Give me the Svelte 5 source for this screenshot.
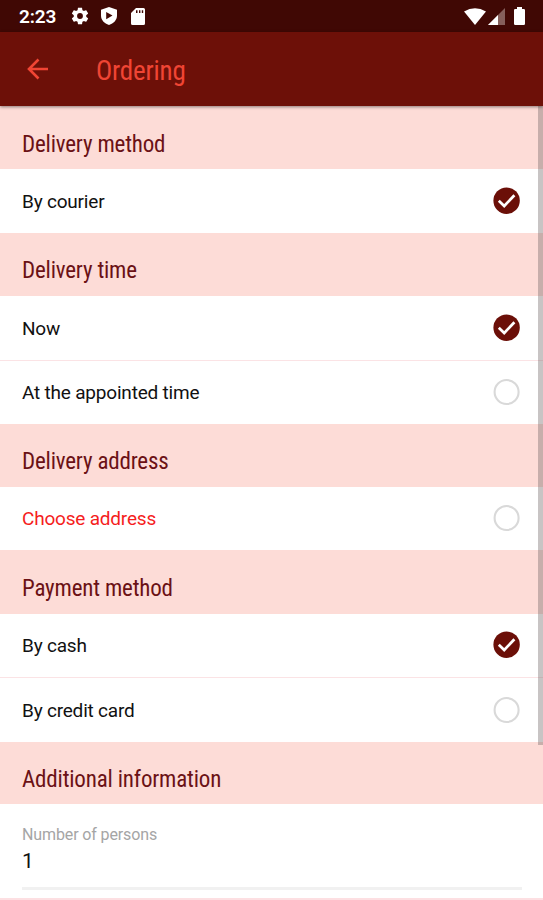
<script>
  const sections = [
    { title: 'Delivery method', head: 63, rows: [{ label: 'By courier', on: true, h: 64 }] },
    { title: 'Delivery time', head: 62.5, rows: [{ label: 'Now', on: true, h: 64 }, { label: 'At the appointed time', h: 64 }] },
    { title: 'Delivery address', head: 63, rows: [{ label: 'Choose address', alert: true, h: 63.5 }] },
    { title: 'Payment method', head: 63.5, rows: [{ label: 'By cash', on: true, h: 63.5 }, { label: 'By credit card', h: 64.5 }] },
    { title: 'Additional information', head: 62.5, rows: [] }
  ];
</script>

<div class="screen">
  <div class="status">
    <span class="clock">2:23</span>
    <svg class="gear" width="20" height="20" viewBox="0 0 24 24"><path fill="#fff" fill-rule="evenodd" d="M19.43 12.98c.04-.32.07-.64.07-.98s-.03-.66-.07-.98l2.11-1.65c.19-.15.24-.42.12-.64l-2-3.46c-.12-.22-.39-.3-.61-.22l-2.49 1c-.52-.4-1.08-.73-1.69-.98l-.38-2.65C14.46 2.18 14.25 2 14 2h-4c-.25 0-.46.18-.49.42l-.38 2.65c-.61.25-1.17.59-1.69.98l-2.49-1c-.23-.09-.49 0-.61.22l-2 3.46c-.13.22-.07.49.12.64l2.11 1.65c-.04.32-.07.65-.07.98s.03.66.07.98l-2.11 1.65c-.19.15-.24.42-.12.64l2 3.46c.12.22.39.3.61.22l2.49-1c.52.4 1.08.73 1.69.98l.38 2.65c.03.24.24.42.49.42h4c.25 0 .46-.18.49-.42l.38-2.65c.61-.25 1.17-.59 1.69-.98l2.49 1c.23.09.49 0 .61-.22l2-3.46c.12-.22.07-.49-.12-.64l-2.11-1.65zM12 15.5A3.5 3.5 0 1 1 12 8.5a3.5 3.5 0 0 1 0 7z"/></svg>
    <svg class="shield" width="16" height="18" viewBox="0 0 16 18"><path fill="#fff" fill-rule="evenodd" d="M8 0 16 2.800V8.500C16 13 12.600 16.600 8 18 3.400 16.600 0 13 0 8.500V2.800ZM5.200 5V12.200L11.500 8.600Z"/></svg>
    <svg class="card" width="14" height="17" viewBox="0 0 14 17"><path fill="#fff" fill-rule="evenodd" d="M5 0H12.500Q14 0 14 1.500V15.500Q14 17 12.500 17H1.500Q0 17 0 15.500V5ZM5 2.200V5H6.500V2.200ZM8 2.200V5H9.400V2.200ZM10.800 2.200V5H12.200V2.200Z"/></svg>
    <span class="grow"></span>
    <svg class="wifi" width="22" height="17" viewBox="0 0 22 17"><path fill="#fff" d="M0 3.500Q11-3.200 22 3.500L11 17Z"/></svg>
    <svg class="signal" width="17" height="17" viewBox="0 0 17 17"><path fill="#855f5b" d="M17 0V17H0Z"/><path fill="#fff" d="M10 7V17H0Z"/></svg>
    <svg class="battery" width="11" height="18" viewBox="0 0 11 18"><path fill="#fff" d="M3 0H8V2H9.800Q11 2 11 3.200V16.800Q11 18 9.800 18H1.200Q0 18 0 16.800V3.200Q0 2 1.200 2H3Z"/></svg>
  </div>
  <header>
    <svg width="22" height="22" viewBox="0 0 22 22" fill="none" stroke="#f04534" stroke-width="2.600"><path d="M21 11H2.500M11.500 1.500 2 11 11.500 20.500"/></svg>
    <h1>Ordering</h1>
  </header>
  <main>
    {#each sections as s}
      <h2 style:height="{s.head}px"><span>{s.title}</span></h2>
      {#each s.rows as r, i}
        <div class="row" class:divided={i > 0} style:height="{r.h}px">
          <span class:alert={r.alert}>{r.label}</span>
          <svg width="28" height="28" viewBox="0 0 28 28" fill="none">
            {#if r.on}
              <circle cx="13.600" cy="13.700" r="13.200" fill="#6b0f08"/>
              <path d="M5.800 13.800 11.200 19 21.400 8.300" stroke="#fff" stroke-width="2.700"/>
            {:else}
              <circle cx="13.600" cy="14" r="12" stroke="#d9d9d9" stroke-width="2.100"/>
            {/if}
          </svg>
        </div>
      {/each}
    {/each}
    <div class="field">
      <div class="label">Number of persons</div>
      <div class="value">1</div>
      <div class="line"></div>
    </div>
    <div class="scroll"></div>
  </main>
</div>

<style>
  .screen { width: 543px; height: 900px; overflow: hidden; background: #fff; font-family: Roboto, sans-serif; color: #111; }
  .status { height: 32px; box-sizing: border-box; background: #400804; display: flex; align-items: center; padding: 0 18px 0 19px; }
  .clock { color: #fff; font-size: 19px; font-weight: 600; line-height: 32px; width: 50px; letter-spacing: -.15px; padding-top: 2px; box-sizing: border-box; }
  .gear { margin-left: 1px; }
  .shield { margin-left: 11px; }
  .card { margin-left: 14px; }
  .grow { flex: 1; }
  .wifi { margin-right: 1px; }
  .signal { margin-left: 1px; }
  .battery { margin-left: 9px; }
  header { height: 74px; background: #6d1008; display: flex; align-items: center; padding-left: 27px; position: relative; z-index: 1; box-shadow: 0 1px 3px rgba(0,0,0,.45); }
  h1 { margin: 4px 0 0 47px; font: 400 27px/32px "Roboto Condensed", Roboto, sans-serif; font-stretch: 75%; letter-spacing: -.18px; color: #f04534; }
  main { position: relative; }
  h2 { box-sizing: border-box; margin: 0; padding: 14px 0 0 22px; background: #fddcd7; color: #6b1115; display: flex; align-items: center; font: 400 23px/30px "Roboto Condensed", Roboto, sans-serif; font-stretch: 75%; letter-spacing: -.18px; white-space: nowrap; }
  .row { box-sizing: border-box; display: flex; align-items: center; justify-content: space-between; padding: 0 22px; font-size: 19px; letter-spacing: -.2px; }
  .row span { padding-top: 1px; }
  .divided { border-top: 1px solid #fbe3e5; }
  .alert { color: #f51d1d; }
  .field { height: 96px; box-sizing: border-box; padding: 21px 21px 0 22px; border-bottom: 2px solid #fddfe2; }
  .label { font-size: 16px; line-height: 20px; color: #a5a5a5; letter-spacing: -.12px; }
  .value { font-size: 21px; line-height: 28px; margin-top: 2px; }
  .line { height: 3px; background: #f1f1f1; margin-top: 12px; }
  .scroll { position: absolute; right: 0; top: 0; width: 5px; height: 639px; background: rgba(110,100,100,.38); }
</style>
